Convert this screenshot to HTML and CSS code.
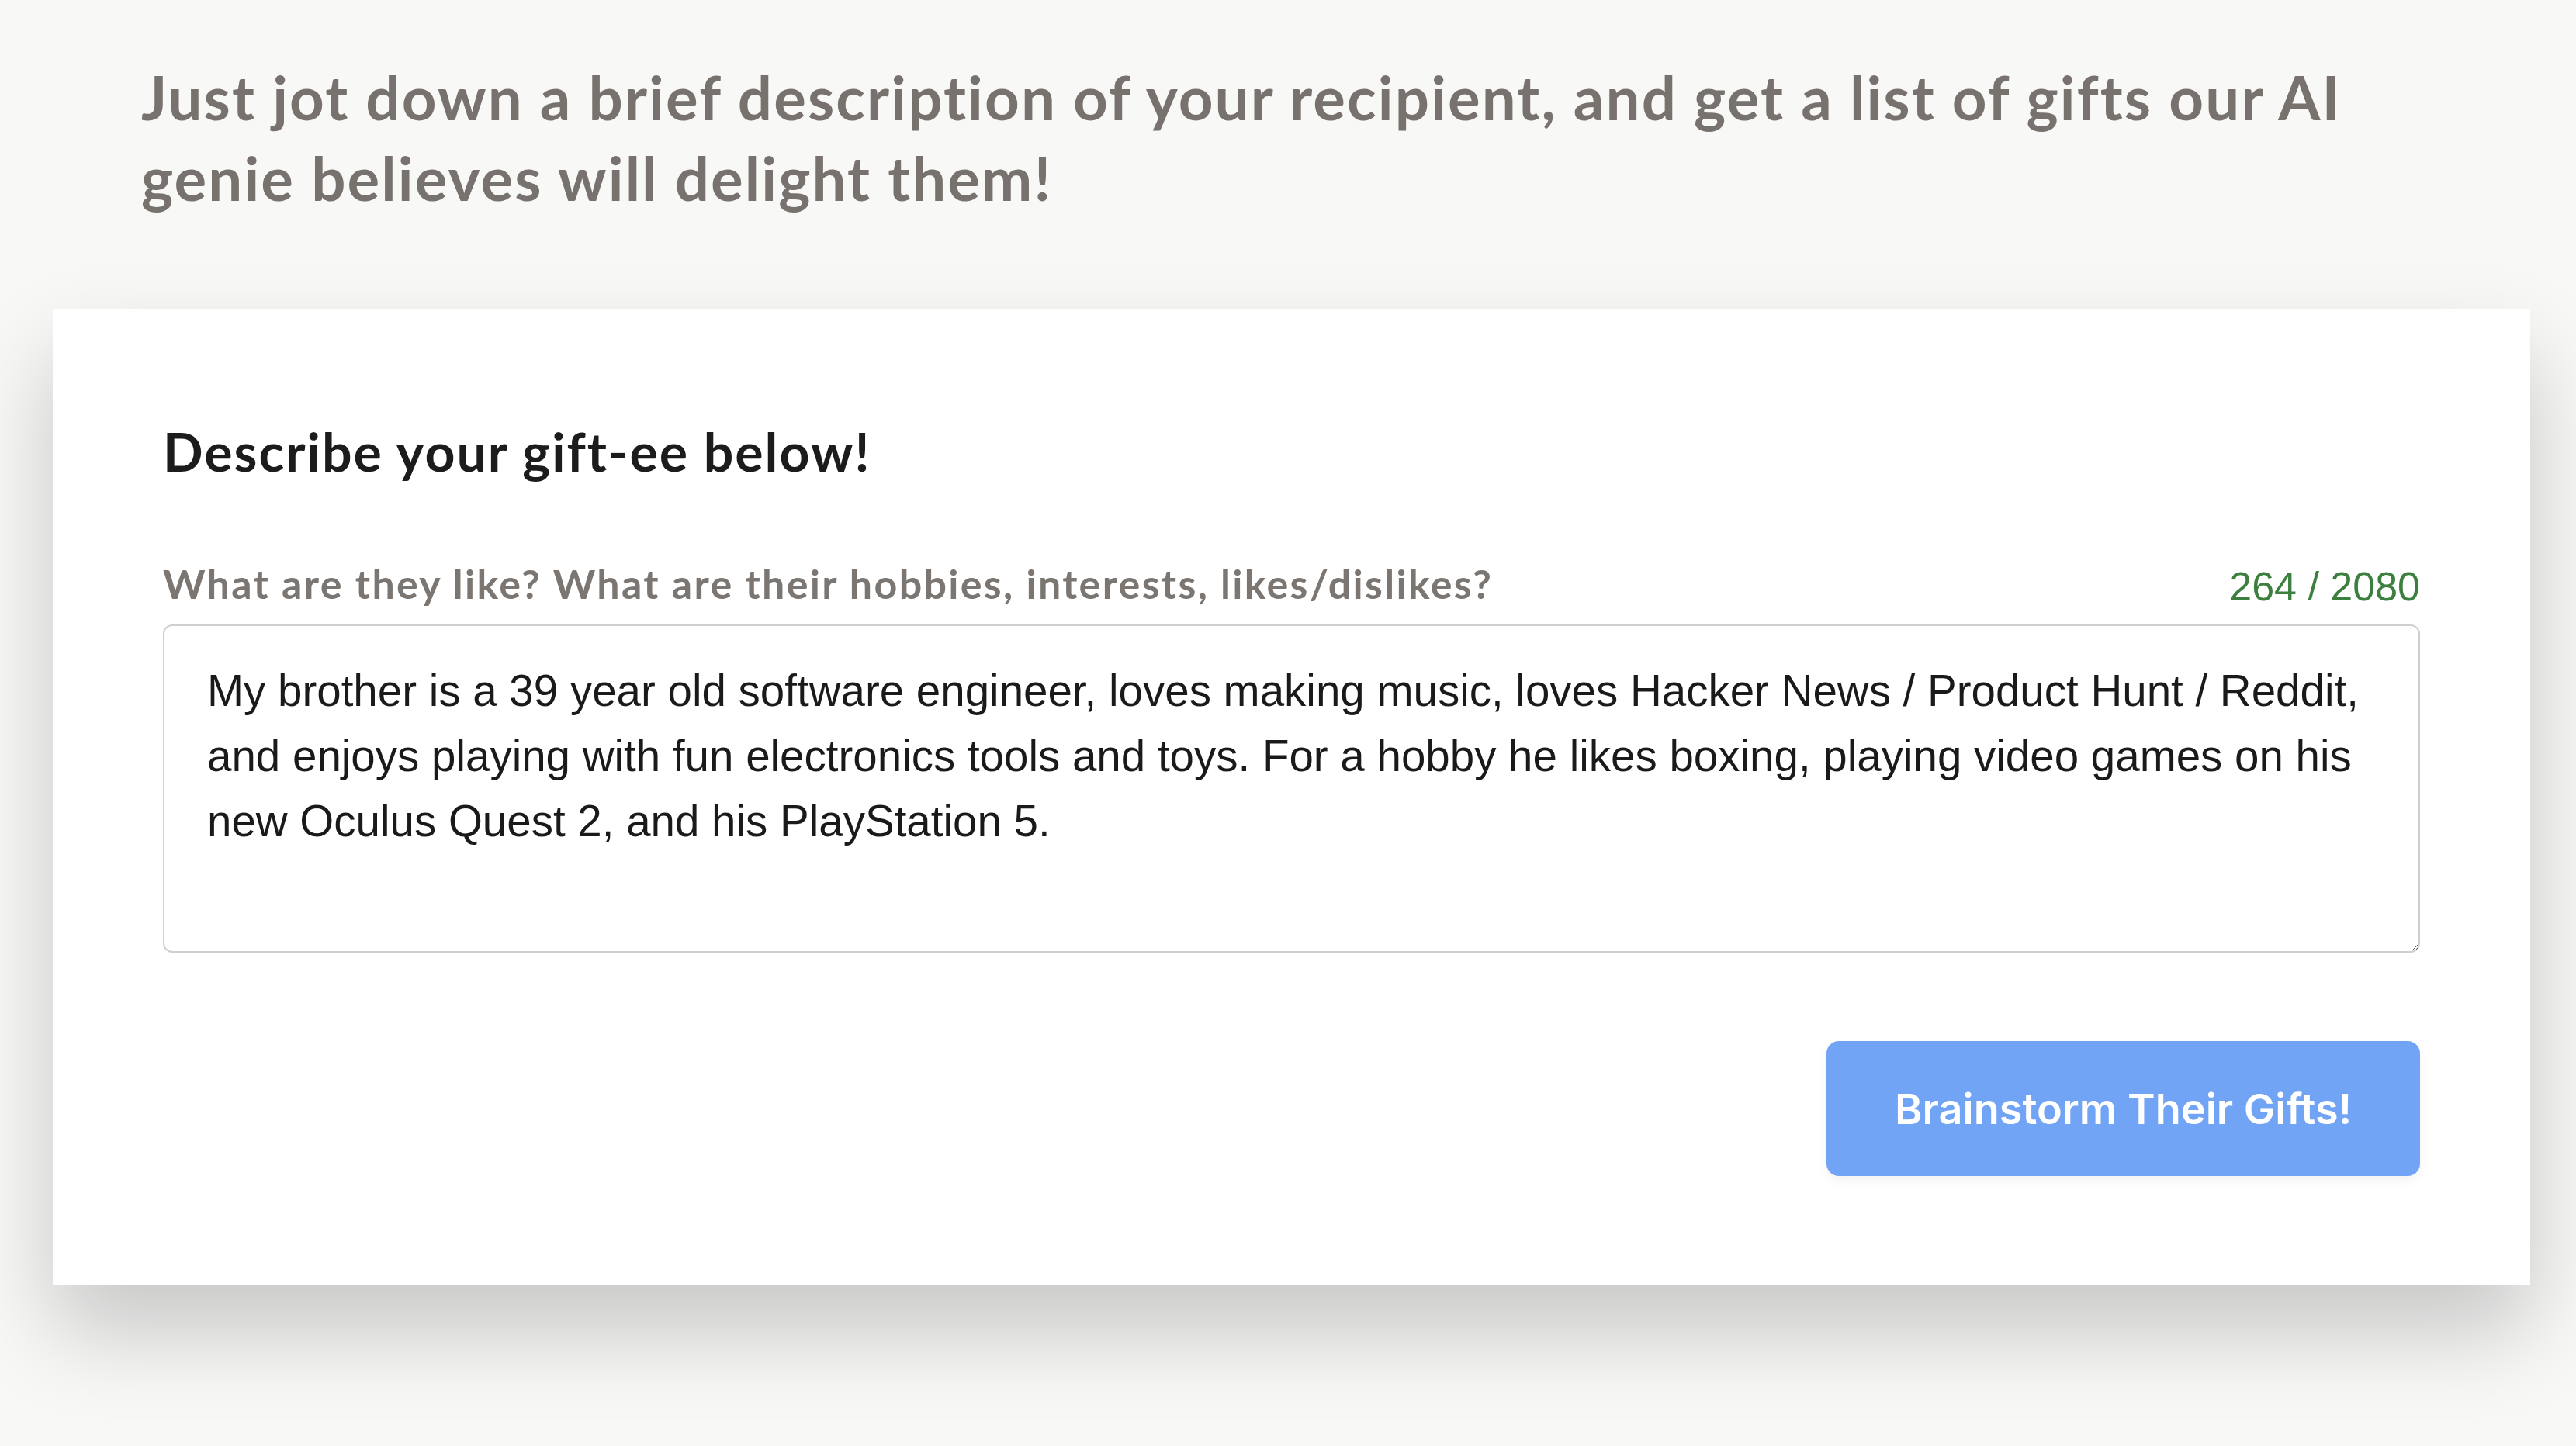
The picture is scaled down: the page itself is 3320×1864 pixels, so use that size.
FILE: index.html
```html
<!DOCTYPE html>
<html lang="en">
<head>
<meta charset="utf-8">
<title>Gift Genie</title>
<link rel="stylesheet" href="styles.css">
</head>
<body>
<p class="intro">Just jot down a brief description of your recipient, and get a list of gifts our AI genie believes will delight them!</p>
<section class="card">
  <h2 class="card-title">Describe your gift-ee below!</h2>
  <div class="field-head">
    <label class="field-label" for="desc">What are they like? What are their hobbies, interests, likes/dislikes?</label>
    <span class="counter">264 / 2080</span>
  </div>
  <textarea id="desc" class="desc">My brother is a 39 year old software engineer, loves making music, loves Hacker News / Product Hunt / Reddit, and enjoys playing with fun electronics tools and toys. For a hobby he likes boxing, playing video games on his new Oculus Quest 2, and his PlayStation 5.</textarea>
  <div class="actions">
    <button class="submit" type="button">Brainstorm Their Gifts!</button>
  </div>
</section>
</body>
</html>
```
FILE: styles.css
```css
html, body {
  margin: 0;
  padding: 0;
  background: #f8f8f7;
  height: 100%;
  overflow: hidden;
}
body {
  font-family: "Lato", "Noto Sans", sans-serif;
}
.intro {
  margin: 73px 0 0 0;
  padding: 0 150px 0 182px;
  font-size: 78px;
  line-height: 104px;
  color: #77726e;
  letter-spacing: 2.1px;
  font-weight: 700;
}
.card {
  margin: 117px 59px 0 68px;
  background: #ffffff;
  padding: 144px 142px 140px 142px;
  box-shadow: 0 60px 110px rgba(0, 0, 0, 0.2);
}
.card-title {
  margin: 0;
  font-size: 68px;
  line-height: 80px;
  font-weight: 700;
  color: #1c1c1c;
  letter-spacing: 2px;
}
.field-head {
  margin-top: 100px;
  display: flex;
  justify-content: space-between;
  align-items: center;
  height: 60px;
}
.field-label {
  font-size: 52px;
  line-height: 60px;
  color: #7b7671;
  font-weight: 700;
  letter-spacing: 2.3px;
}
.counter {
  font-family: "Liberation Sans", Arial, sans-serif;
  font-size: 52px;
  color: #3c7f3e;
  padding-top: 8px;
}
.desc {
  display: block;
  box-sizing: border-box;
  width: 100%;
  height: 423px;
  margin-top: 23px;
  padding: 42px 55px;
  border: 2px solid #cfcfcf;
  border-radius: 12px;
  font-family: "Liberation Sans", Arial, sans-serif;
  font-size: 56.5px;
  line-height: 84px;
  color: #1a1a1a;
  resize: vertical;
  outline: none;
}
.actions {
  display: flex;
  justify-content: flex-end;
  margin-top: 114px;
}
.submit {
  width: 765px;
  height: 174px;
  border: none;
  border-radius: 16px;
  background: #72a4f5;
  color: #ffffff;
  font-family: "Inter", "Liberation Sans", sans-serif;
  font-size: 54px;
  font-weight: 600;
  box-shadow: 0 6px 14px rgba(0, 0, 0, 0.05);
}
```
